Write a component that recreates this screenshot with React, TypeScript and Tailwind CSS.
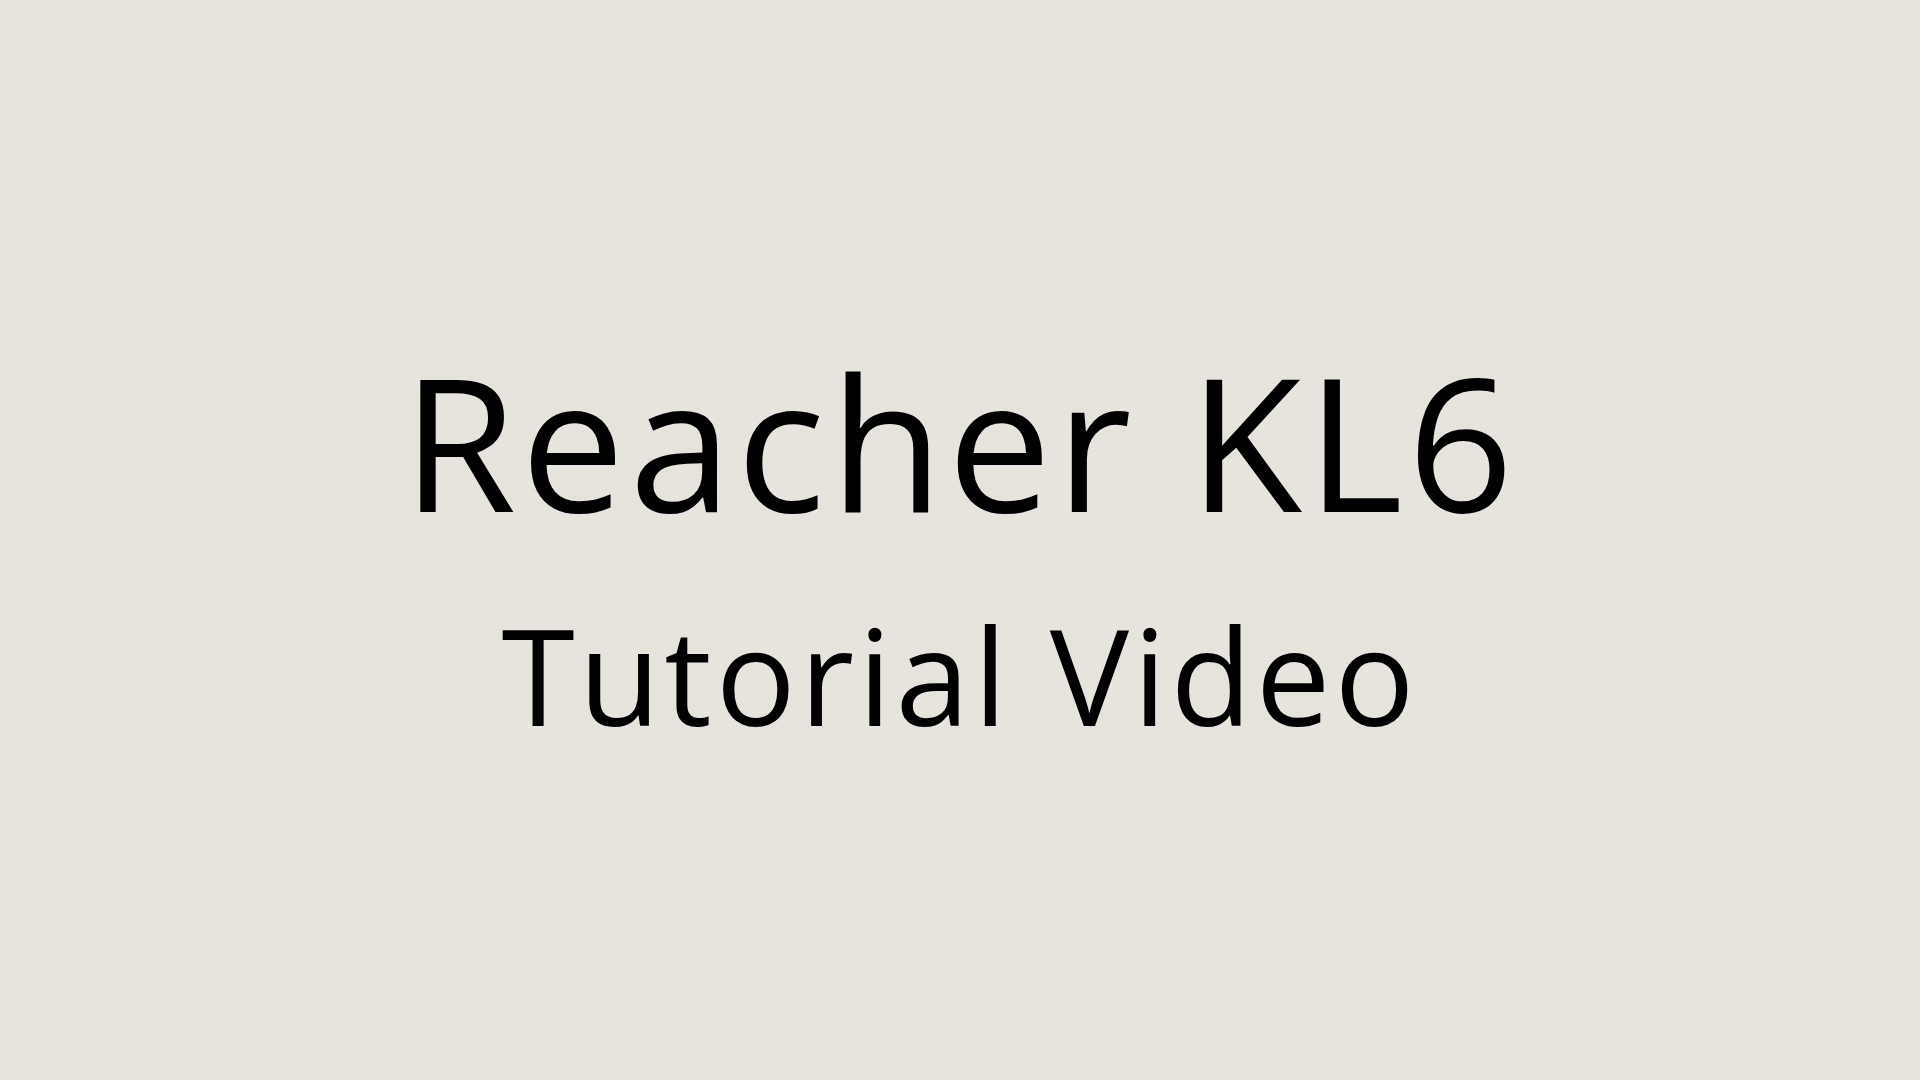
export default function App() {
  return (
    <div className="h-screen w-full bg-[#e7e4dd] flex flex-col items-center justify-center pt-[9px] text-black" style={{ fontFamily: '"Open Sans", "Noto Sans", sans-serif' }}>
      <h1 className="text-[185px] leading-none font-normal tracking-[4.5px]">Reacher KL6</h1>
      <h2 className="mt-[75px] text-[133px] leading-none font-normal tracking-[4px]">Tutorial Video</h2>
    </div>
  );
}
